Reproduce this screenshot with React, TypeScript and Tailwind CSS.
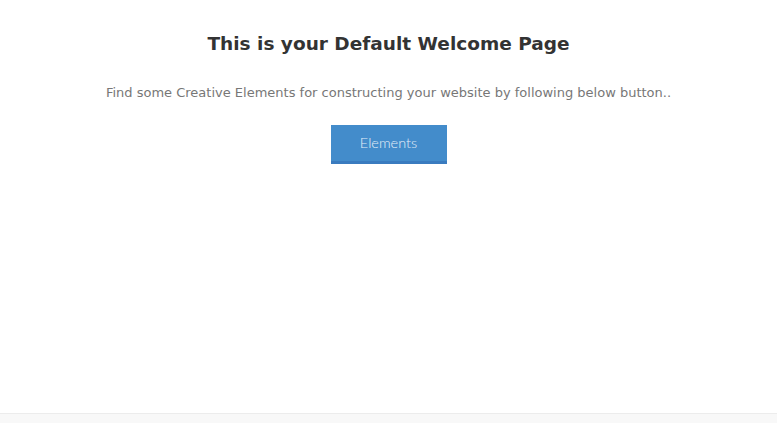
import React from 'react';

export default function App() {
  return (
    <div className="flex h-[423px] w-full flex-col bg-white font-['DejaVu_Sans',sans-serif]">
      <div className="flex flex-1 flex-col items-center pt-[32px]">
        <h1 className="text-[18.5px] font-bold leading-6 text-[#333]">This is your Default Welcome Page</h1>
        <p className="mt-[27px] text-[13px] leading-5 text-[#777]">
          Find some Creative Elements for constructing your website by following below button..
        </p>
        <button className="mt-[22px] h-[39px] w-[116px] border-b-[3px] border-[#3a7bbf] bg-[#438ccb] pb-[1px] font-['Lato',sans-serif] text-[14.5px] font-light text-[#e3eef8]">
          Elements
        </button>
      </div>
      <div className="h-[10px] border-t border-[#ececec] bg-[#f8f8f8]" />
    </div>
  );
}
